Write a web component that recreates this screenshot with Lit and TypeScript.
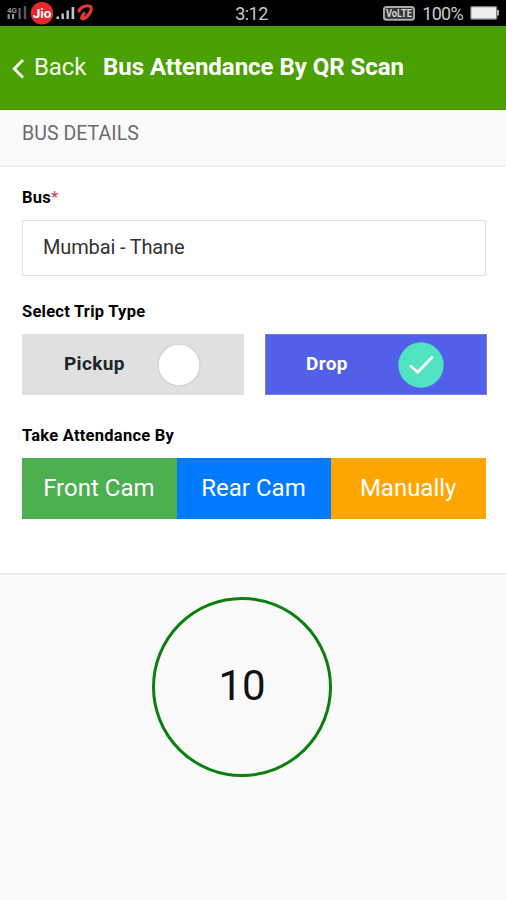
import { LitElement, html, css } from "lit";
import { customElement, property } from "lit/decorators.js";

@customElement("status-bar")
class StatusBar extends LitElement {
  static styles = css`
    :host { display: block; height: 26px; background: #000; color: #c9c9c9; font-size: 18px; }
    .row { display: grid; grid-template-columns: 1fr auto 1fr; align-items: center; height: 26px; }
    .left { display: flex; }
    .right { display: flex; justify-content: flex-end; align-items: center; padding-right: 5px; }
    .time { font-size: 18px; letter-spacing: -0.5px; margin-right: 3px; }
    .pct { font-size: 18px; letter-spacing: -0.7px; margin: 0 7px 0 7px; }
    svg { display: block; }
  `;
  render() {
    return html`<div class="row">
      <div class="left">
        <svg width="100" height="26" viewBox="0 0 100 26">
          <g fill="#8f8f8f">
            <text x="7" y="12.8" font-size="8" font-weight="700">4G</text>
            <rect x="7.6" y="14" width="2.2" height="5" />
            <rect x="12" y="14" width="2.2" height="5" />
            <rect x="18.5" y="8" width="2.2" height="11" opacity=".7" />
            <rect x="23.8" y="6" width="2.4" height="13" opacity=".6" />
          </g>
          <circle cx="42" cy="13.3" r="11.3" fill="#e8262b" />
          <text x="42" y="18.4" text-anchor="middle" font-size="13.5" font-weight="700" fill="#fff">Jio</text>
          <g fill="#c4c4c4">
            <rect x="56.5" y="16.5" width="2.5" height="2.5" />
            <rect x="61.5" y="13.5" width="2.4" height="5.5" />
            <rect x="66.5" y="10.5" width="2.4" height="8.5" />
            <rect x="71.6" y="7" width="2.6" height="12" />
          </g>
          <path d="M79 11C80.5 6.5 88.5 4.3 90.8 7C93 10.4 87 18.2 82.8 18.8C81 18.9 81.3 16.3 84.2 13.6" fill="none" stroke="#e5382f" stroke-width="3.2" stroke-linecap="round" stroke-linejoin="round" />
        </svg>
      </div>
      <span class="time">3:12</span>
      <div class="right">
        <svg width="34" height="26" viewBox="0 0 34 26">
          <rect x="2" y="6" width="32" height="14.8" rx="3.5" fill="#aaa" />
          <rect x="3.9" y="8" width="28.2" height="10.8" rx="2" fill="#333" />
          <text x="18" y="17" text-anchor="middle" font-size="10" font-weight="700" fill="#d4d4d4" textLength="26" lengthAdjust="spacingAndGlyphs">VoLTE</text>
        </svg>
        <span class="pct">100%</span>
        <svg width="31" height="26" viewBox="0 0 31 26">
          <rect x=".8" y="6.6" width="26" height="12.6" rx="1.2" fill="#ededed" stroke="#777" stroke-width="1.2" />
          <rect x="27" y="10" width="2" height="5.5" fill="#aaa" />
        </svg>
      </div>
    </div>`;
  }
}

@customElement("trip-option")
class TripOption extends LitElement {
  @property() label = "";
  @property({ type: Boolean, reflect: true }) selected = false;
  static styles = css`
    :host { display: flex; align-items: center; box-sizing: border-box; height: 61px; padding-left: 42px; background: #e0e0e0; color: #212529; }
    :host([selected]) { background: #525fe8; color: #fff; border: 1px solid #7680ea; padding-left: 40px; }
    .label { width: 91px; font-size: 19px; font-weight: 700; line-height: 22px; letter-spacing: 0.35px; padding-bottom: 1px; }
    svg { display: block; }
  `;
  render() {
    return html`<span class="label">${this.label}</span>
      ${this.selected
        ? html`<svg width="48" height="48" viewBox="0 0 48 48">
            <circle cx="24" cy="24" r="22.7" fill="#50e3c2" />
            <path d="M14 25.2L20.8 31.3L35 16.2" fill="none" stroke="#fff" stroke-width="2.8" stroke-linecap="round" stroke-linejoin="round" />
          </svg>`
        : html`<svg width="48" height="48" viewBox="0 0 48 48">
            <circle cx="24" cy="24" r="20.9" fill="#fff" stroke="#d1d5d7" stroke-width="1.4" />
          </svg>`}`;
  }
}

@customElement("app-root")
class AppRoot extends LitElement {
  static styles = css`
    :host { display: block; height: 900px; overflow: hidden; background: #fafafa; font-family: Roboto, "Liberation Sans", sans-serif; color: #000; }
    .header { display: flex; align-items: center; box-sizing: border-box; height: 84px; padding: 0 12px 1px; background: #4aa000; color: #fff; font-size: 24px; line-height: 28px; border-bottom: 1px solid #459200; }
    .chevron { display: block; margin: 4px 9px 0 0; }
    .back { width: 69px; color: #f2f8e8; letter-spacing: -0.1px; }
    .title { font-weight: 700; white-space: nowrap; letter-spacing: -0.03px; }
    .section { box-sizing: border-box; height: 57px; padding: 12px 22px 0; border-bottom: 2px solid #f0f0f0; font-size: 19.5px; letter-spacing: 0.05px; line-height: 24px; color: #6c6c6c; }
    .form { box-sizing: border-box; height: 408px; padding: 21px 19px 0 22px; background: #fff; border-bottom: 2px solid #eeeeee; }
    .label { font-size: 16.5px; line-height: 20px; font-weight: 700; letter-spacing: 0.25px; }
    .req { color: #dc3560; font-weight: 400; }
    .field { box-sizing: border-box; width: 464px; height: 56px; margin: 12px 0 26px; padding: 0 20px 2px; display: flex; align-items: center; border: 1px solid #e2e2e2; font-size: 20px; letter-spacing: -0.15px; color: #333; }
    .trips { display: grid; grid-template-columns: 222px 222px; gap: 21px; margin: 12px 0 31px; }
    .modes { display: grid; grid-template-columns: repeat(3, 1fr); width: 464px; height: 61px; margin-top: 12px; }
    .mode { display: flex; align-items: center; justify-content: center; padding: 0 1px 2px 0; color: #fff; font-size: 24px; }
    .front { background: #4caf50; }
    .rear { background: #007bff; }
    .manual { background: #ffa500; }
    .counter { display: flex; align-items: center; justify-content: center; box-sizing: border-box; width: 180px; height: 180px; margin: 22px 0 0 152px; padding-bottom: 4px; border: 3px solid #0c800c; border-radius: 50%; font-size: 42px; color: #111; }
  `;
  render() {
    return html`
      <status-bar></status-bar>
      <div class="header">
        <svg class="chevron" width="13" height="22" viewBox="0 0 13 22">
          <path d="M11 2L2.2 10.8L11 19.6" fill="none" stroke="#fff" stroke-width="2.8" />
        </svg>
        <span class="back">Back</span>
        <span class="title">Bus Attendance By QR Scan</span>
      </div>
      <div class="section">BUS DETAILS</div>
      <div class="form">
        <div class="label">Bus<span class="req">*</span></div>
        <div class="field">Mumbai - Thane</div>
        <div class="label">Select Trip Type</div>
        <div class="trips">
          <trip-option label="Pickup"></trip-option>
          <trip-option label="Drop" selected></trip-option>
        </div>
        <div class="label">Take Attendance By</div>
        <div class="modes">
          <div class="mode front">Front Cam</div>
          <div class="mode rear">Rear Cam</div>
          <div class="mode manual">Manually</div>
        </div>
      </div>
      <div class="counter">10</div>
    `;
  }
}
